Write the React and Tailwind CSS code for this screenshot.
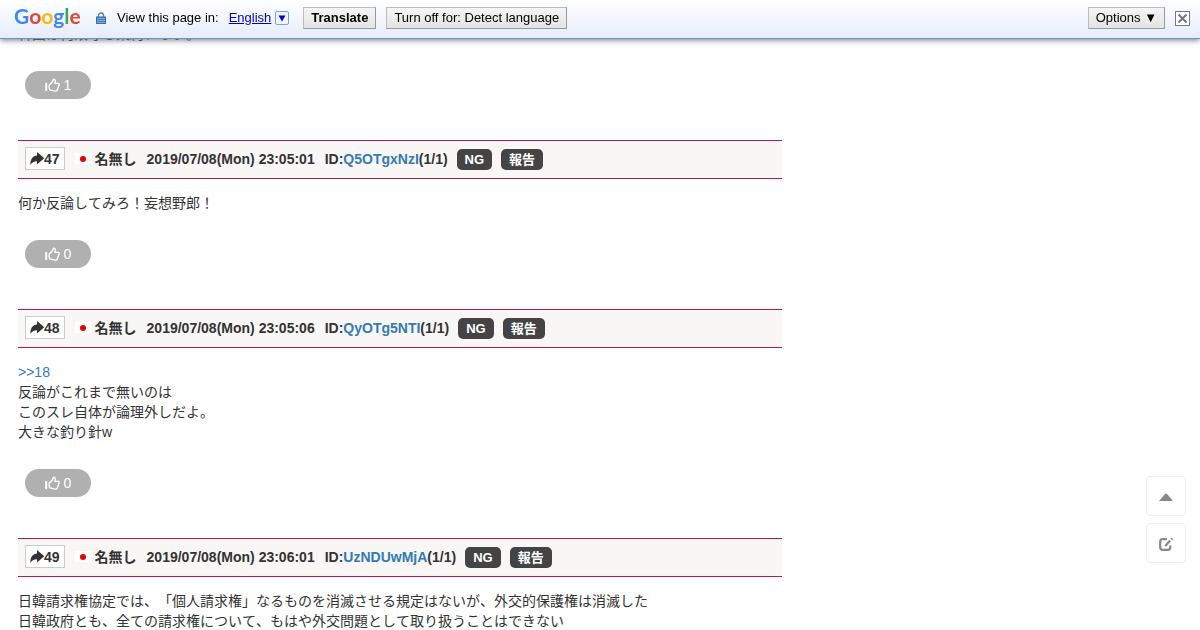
import React from 'react'

const posts = [
  {
    no: 47,
    name: '名無し',
    date: '2019/07/08(Mon) 23:05:01',
    id: 'Q5OTgxNzI',
    lines: ['何か反論してみろ！妄想野郎！'],
    likes: 0,
  },
  {
    no: 48,
    name: '名無し',
    date: '2019/07/08(Mon) 23:05:06',
    id: 'QyOTg5NTI',
    reply: 18,
    lines: ['反論がこれまで無いのは', 'このスレ自体が論理外しだよ。', '大きな釣り針w'],
    likes: 0,
  },
  {
    no: 49,
    name: '名無し',
    date: '2019/07/08(Mon) 23:06:01',
    id: 'UzNDUwMjA',
    lines: [
      '日韓請求権協定では、「個人請求権」なるものを消滅させる規定はないが、外交的保護権は消滅した',
      '日韓政府とも、全ての請求権について、もはや外交問題として取り扱うことはできない',
    ],
    likes: 0,
  },
]

const ShareIcon = () => (
  <svg viewBox="0 0 14 13" className="w-[14px] h-[13px]" fill="#333" aria-hidden="true">
    <path d="M7 0L14.300 6.300 7 12.600V9.300C4 9.200 2 10.400 0.400 13 0 7.500 2.600 3.700 7 3.400z" />
  </svg>
)

const ThumbIcon = () => (
  <svg viewBox="0 0 15 14" className="w-[15px] h-[14px]" fill="none" stroke="#fff" strokeWidth="1.3" strokeLinejoin="round" aria-hidden="true">
    <path d="M1.200 5v8" strokeWidth="2" />
    <path d="M4.600 6.600C6.400 5.300 8 3.300 8.600 1.200c1.800-.1 2.200 1.800 1.200 4.100h3.300c1.300 0 1.300 1.300.8 2.200L12.300 12c-.3.800-.9 1.100-1.700 1.100-2.500 0-3.500-.8-5.700-1.200-.8-1.400-1-3.700-.3-5.300z" />
  </svg>
)

const LockIcon = () => (
  <svg viewBox="0 0 10 12" className="w-[10px] h-3" aria-hidden="true">
    <path d="M2.500 5.500V3.500a2.500 2.500 0 0 1 5 0V5.500" fill="none" stroke="#5d82b5" strokeWidth="1.400" />
    <rect x="0.500" y="5" width="9" height="6.500" fill="#4a7ebb" stroke="#3a6cae" />
    <path d="M1 6.500h8M1 8.500h8M1 10.500h8" stroke="#8fb3e0" strokeWidth="0.800" />
  </svg>
)

const EditIcon = () => (
  <svg viewBox="0 0 14 14" className="w-[14px] h-[14px]" fill="none" stroke="#888" aria-hidden="true">
    <path d="M8 2.200H3.800C2.200 2.200 1.200 3.100 1.200 4.700v5.600c0 1.600 1 2.500 2.600 2.500h4.900c1.600 0 2.600-.9 2.600-2.500V8.500" strokeWidth="2.200" />
    <path d="M6.200 9l5-5.500M12.300 2.400l1-1.100" strokeWidth="2.200" />
  </svg>
)

const Logo = () => (
  <span className="w-[68px] pb-1 font-['Lato',sans-serif] font-bold text-[21px] leading-6">
    <span className="text-[#4285f4]">G</span>
    <span className="text-[#ea4335]">o</span>
    <span className="text-[#fbbc05]">o</span>
    <span className="text-[#4285f4]">g</span>
    <span className="text-[#34a853]">l</span>
    <span className="text-[#ea4335]">e</span>
  </span>
)

const barButton =
  'h-[22px] px-[7px] text-[13px] leading-5 text-black border border-[#bbb] border-r-[#999] border-b-[#999] bg-linear-to-b from-[#f5f5f5] to-[#e4e4e4] whitespace-nowrap'

const TranslateBar = () => (
  <header className="fixed top-0 inset-x-0 z-10 h-[39px] pl-[14px] pr-[10px] pb-[2px] flex items-center text-[13px] text-black bg-linear-to-b from-white to-[#e5edfa] border-b border-[#6b90da] shadow-[0_1px_6px_#777]">
    <Logo />
    <span className="ml-[14px] mr-[11px]">
      <LockIcon />
    </span>
    <span>View this page in:</span>
    <a href="#language" className="ml-[10px] flex items-center text-[#0000cc]">
      <span className="underline">English</span>
      <span className="ml-1 w-[14px] h-[14px] flex items-center justify-center rounded-xs border border-[#7f9fd8] bg-[#eef3fc]">
        <svg viewBox="0 0 8 7" className="w-2 h-[7px]" fill="#0000cc" aria-hidden="true">
          <path d="M0.500 0.500h7L4 6.500z" />
        </svg>
      </span>
    </a>
    <button className={`${barButton} ml-[14px] font-bold`}>Translate</button>
    <button className={`${barButton} ml-[10px]`}>Turn off for: Detect language</button>
    <button className={`${barButton} ml-auto`}>Options ▼</button>
    <button aria-label="Close" className="ml-[10px] w-[15px] h-[15px] flex items-center justify-center border border-[#777] bg-white">
      <svg viewBox="0 0 9 9" className="w-[9px] h-[9px]" stroke="#777" strokeWidth="2" aria-hidden="true">
        <path d="M0.500 0.500l8 8M8.500 0.500l-8 8" />
      </svg>
    </button>
  </header>
)

const LikeButton = ({ count }) => (
  <button className="mt-[27px] mb-[41px] ml-[7px] h-7 w-[66px] flex items-center justify-center gap-1 rounded-full bg-[#b0b0b0] text-white">
    <ThumbIcon />
    <span>{count}</span>
  </button>
)

const Post = ({ post }) => (
  <article>
    {/* Post header */}
    <div className="h-[39px] px-[7px] pb-[2px] flex items-center bg-[#f8f7f5] border-y border-y-[#a82050] font-bold">
      <button className="h-[23px] px-1 flex items-center bg-white border border-[#ccc]">
        <ShareIcon />
        <span>{post.no}</span>
      </button>
      <span className="ml-[10px] w-4 h-[11px] flex items-center justify-center bg-white">
        <span className="w-[6px] h-[6px] rounded-full bg-[#e60000]"></span>
      </span>
      <span className="ml-1 [font-kerning:none]">{post.name}</span>
      <span className="ml-[10px]">{post.date}</span>
      <span className="ml-[10px]">
        ID:<a href={`#${post.id}`} className="text-[#337ab7]">{post.id}</a>(1/1)
      </span>
      <button className="ml-[9px] mt-[2px] h-[21px] px-2 rounded-[5px] bg-[#444] text-white text-[13px] leading-5">NG</button>
      <button className="ml-[9px] mt-[2px] h-[21px] px-2 rounded-[5px] bg-[#444] text-white text-[13px] leading-5">報告</button>
    </div>

    {/* Body */}
    <div className="mt-[14px] [font-kerning:none] [text-spacing-trim:space-all]">
      {post.reply && <a href={`#${post.reply}`} className="block text-[#337ab7]">&gt;&gt;{post.reply}</a>}
      {post.lines.map((line) => (
        <p key={line}>{line}</p>
      ))}
    </div>

    <LikeButton count={post.likes} />
  </article>
)

const App = () => {
  return (
    <div className="h-screen overflow-hidden bg-white text-[#333] text-sm leading-5 font-['Liberation_Sans','Noto_Sans_CJK_JP',sans-serif]">
      <TranslateBar />

      <main className="pt-6 ml-[18px] max-w-[764px]">
        {/* End of the post that is scrolled under the bar */}
        <p>韓国は何故守る条約、ない。</p>
        <LikeButton count={1} />

        {posts.map((post) => (
          <Post key={post.no} post={post} />
        ))}
      </main>

      {/* Floating buttons */}
      <div className="fixed right-[14px] bottom-[67px] flex flex-col gap-[7px]">
        <button aria-label="Back to top" className="w-10 h-10 pt-[2px] flex items-center justify-center rounded-sm border border-[#eee] bg-white">
          <svg viewBox="0 0 14 8" className="w-[14px] h-2" fill="#888" aria-hidden="true">
            <path d="M0 8l6-7q1-1 2 0l6 7z" />
          </svg>
        </button>
        <button aria-label="Write" className="w-10 h-10 pt-[2px] flex items-center justify-center rounded-sm border border-[#eee] bg-white">
          <EditIcon />
        </button>
      </div>
    </div>
  )
}

export default App
